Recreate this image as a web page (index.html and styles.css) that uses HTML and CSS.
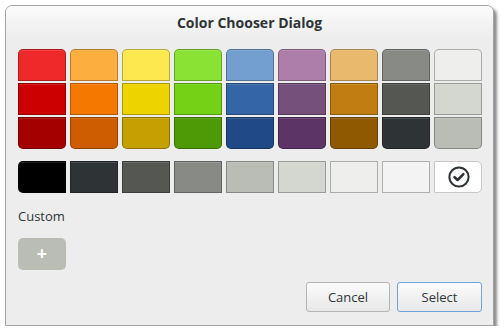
FILE: index.html
```html
<!DOCTYPE html>
<html>
<head>
<meta charset="utf-8">
<link rel="stylesheet" href="styles.css">
</head>
<body>
<div class="window">
  <div class="titlebar"><span class="title">Color Chooser Dialog</span></div>
  <div class="content">
    <div class="palette">
      <div class="sw top" style="background:#ef2929"></div>
      <div class="sw top" style="background:#fcaf3e"></div>
      <div class="sw top" style="background:#fce94f"></div>
      <div class="sw top" style="background:#8ae234"></div>
      <div class="sw top" style="background:#729fcf"></div>
      <div class="sw top" style="background:#ad7fa8"></div>
      <div class="sw top" style="background:#e9b96e"></div>
      <div class="sw top" style="background:#888a85"></div>
      <div class="sw top" style="background:#eeeeec"></div>

      <div class="sw" style="background:#cc0000"></div>
      <div class="sw" style="background:#f57900"></div>
      <div class="sw" style="background:#edd400"></div>
      <div class="sw" style="background:#73d216"></div>
      <div class="sw" style="background:#3465a4"></div>
      <div class="sw" style="background:#75507b"></div>
      <div class="sw" style="background:#c17d11"></div>
      <div class="sw" style="background:#555753"></div>
      <div class="sw" style="background:#d3d7cf"></div>

      <div class="sw bottom" style="background:#a40000"></div>
      <div class="sw bottom" style="background:#ce5c00"></div>
      <div class="sw bottom" style="background:#c4a000"></div>
      <div class="sw bottom" style="background:#4e9a06"></div>
      <div class="sw bottom" style="background:#204a87"></div>
      <div class="sw bottom" style="background:#5c3566"></div>
      <div class="sw bottom" style="background:#8f5902"></div>
      <div class="sw bottom" style="background:#2e3436"></div>
      <div class="sw bottom" style="background:#babdb6"></div>
    </div>

    <div class="grays">
      <div class="sw left" style="background:#000000"></div>
      <div class="sw" style="background:#2e3436"></div>
      <div class="sw" style="background:#555753"></div>
      <div class="sw" style="background:#888a85"></div>
      <div class="sw" style="background:#babdb6"></div>
      <div class="sw" style="background:#d3d7cf"></div>
      <div class="sw" style="background:#eeeeec"></div>
      <div class="sw" style="background:#f3f3f3"></div>
      <div class="sw right selected" style="background:#ffffff">
        <svg width="24" height="24" viewBox="0 0 24 24">
          <circle cx="12" cy="12" r="9.6" fill="none" stroke="#2e3436" stroke-width="2"/>
          <path d="M7.6 12.2 L10.6 15 L16.4 9.2" fill="none" stroke="#2e3436" stroke-width="2.6" stroke-linecap="round" stroke-linejoin="round"/>
        </svg>
      </div>
    </div>

    <div class="label">Custom</div>
    <div class="add">+</div>

    <div class="actions">
      <button class="btn">Cancel</button>
      <button class="btn focus">Select</button>
    </div>
  </div>
</div>
</body>
</html>
```

FILE: styles.css
```css
html, body {
  margin: 0;
  padding: 0;
  background: #ffffff;
}
body {
  font-family: "Open Sans", "DejaVu Sans", sans-serif;
  color: #2e3436;
}
.window {
  margin: 5px 0 0 5px;
  width: 489px;
  height: 321px;
  box-sizing: border-box;
  border: 1px solid #a3a3a3;
  border-radius: 7px 7px 0 0;
  background: #ededed;
  box-shadow: 3px 3px 3px rgba(0, 0, 0, 0.45);
  display: flex;
  flex-direction: column;
}
.titlebar {
  height: 32px;
  flex: none;
  display: flex;
  align-items: center;
  justify-content: center;
  border-radius: 6px 6px 0 0;
  background: linear-gradient(#fbfbfb, #ededed);
}
.title {
  font-weight: bold;
  font-size: 14px;
  line-height: 16px;
  margin-top: 1px;
  color: #2e3436;
}
.content {
  padding: 11px 11px 0 12px;
  display: flex;
  flex-direction: column;
}
.palette {
  display: grid;
  grid-template-columns: repeat(9, 48px);
  grid-auto-rows: 32px;
  column-gap: 4px;
  row-gap: 2px;
}
.grays {
  margin-top: 12px;
  display: grid;
  grid-template-columns: repeat(9, 48px);
  grid-auto-rows: 32px;
  column-gap: 4px;
}
.sw {
  box-sizing: border-box;
  border: 1px solid rgba(0, 0, 0, 0.28);
  box-shadow: inset 0 1px rgba(255, 255, 255, 0.12);
}
.sw.top { border-radius: 5px 5px 0 0; }
.sw.bottom { border-radius: 0 0 5px 5px; }
.sw.left { border-radius: 5px 0 0 5px; }
.sw.right { border-radius: 0 5px 5px 0; }
.sw.selected {
  border-color: #c8c8c8;
  display: flex;
  align-items: center;
  justify-content: center;
}
.sw.selected svg { margin-left: 1px; }
.label {
  margin-top: 14px;
  font-size: 13px;
  line-height: 18px;
  color: #2e3436;
}
.add {
  margin-top: 13px;
  width: 48px;
  height: 32px;
  border-radius: 5px;
  background: #babdb6;
  color: #ffffff;
  font-weight: bold;
  font-size: 18px;
  line-height: 31px;
  text-align: center;
}
.actions {
  margin-top: 12px;
  display: flex;
  justify-content: flex-end;
  gap: 7px;
}
.btn {
  box-sizing: border-box;
  height: 30px;
  border: 1px solid #b4b4b4;
  border-radius: 3px;
  background: linear-gradient(#fbfbfb, #e8e8e8);
  font-family: "Open Sans", "DejaVu Sans", sans-serif;
  font-size: 13px;
  color: #2e3436;
  padding: 0;
  width: 84px;
}
.btn.focus {
  width: 85px;
  border-color: #72a2d8;
}
```
